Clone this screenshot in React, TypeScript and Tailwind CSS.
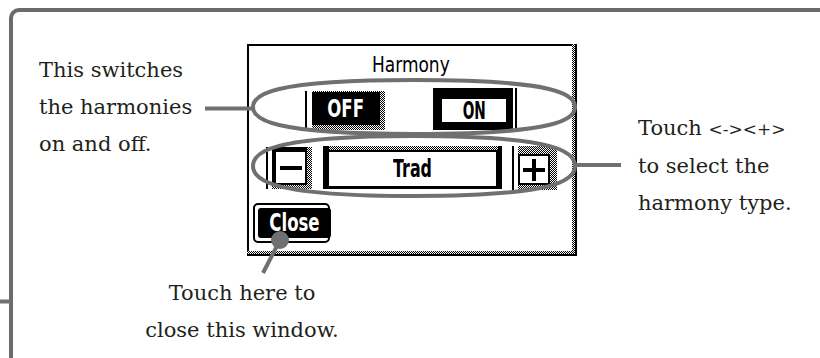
import React from 'react'

const dither = 'bg-[image:repeating-conic-gradient(#000_0%_25%,#fff_0%_50%)] bg-[length:2px_2px]'
const lcd = "font-['DejaVu_Sans',sans-serif] font-bold text-black"

// oval with pointed tips and fuller middle, like the hand drawn callouts
function ovalPath(cx: number, cy: number, rx: number, ry: number) {
  const a = 0.45
  const b = 0.9
  return [
    `M ${cx - rx} ${cy}`,
    `C ${cx - rx} ${cy - a * ry} ${cx - b * rx} ${cy - ry} ${cx} ${cy - ry}`,
    `C ${cx + b * rx} ${cy - ry} ${cx + rx} ${cy - a * ry} ${cx + rx} ${cy}`,
    `C ${cx + rx} ${cy + a * ry} ${cx + b * rx} ${cy + ry} ${cx} ${cy + ry}`,
    `C ${cx - b * rx} ${cy + ry} ${cx - rx} ${cy + a * ry} ${cx - rx} ${cy}`,
    'Z',
  ].join(' ')
}

function Label({ text, scale }: { text: string; scale: string }) {
  return (
    <span className={`inline-block text-[24px] leading-[24px] ${scale}`}>{text}</span>
  )
}

function HarmonyPanel() {
  return (
    <div className="w-[330px] h-[212px] bg-black pr-[2px] pb-[2px] flex">
      <div className={`flex-1 flex pr-[3px] pb-[3px] ${dither}`}>
        <div className={`flex-1 flex flex-col bg-white border-t-2 border-l-2 border-black ${lcd}`}>
          {/* title */}
          <div className="mt-[8px] h-[22px] flex justify-center">
            <span className="inline-block font-normal text-[20.5px] leading-[22px] scale-x-[0.83]">Harmony</span>
          </div>

          {/* OFF / ON */}
          <div className="mt-[12px] h-[42px] flex items-start pl-[56px] gap-[48px]">
            <div className="mt-[3px] h-[39px] w-[80px] flex border-l-2 border-black pl-[5px]">
              <div className={`flex-1 flex pr-[5px] pb-[5px] pt-[1px] ${dither}`}>
                <div className="flex-1 bg-black text-white flex items-center justify-center">
                  <Label text="OFF" scale="scale-x-[0.69]" />
                </div>
              </div>
            </div>
            <div className="flex h-[42px]">
              <div className="w-[80px] bg-black pt-[9px] pl-[7px] pr-[5px] pb-[6px] flex">
                <div className="flex-1 bg-white border-2 border-black flex items-center justify-center">
                  <Label text="ON" scale="scale-x-[0.57]" />
                </div>
              </div>
              <div className="ml-[2px] w-[2px] bg-black" />
            </div>
          </div>

          {/* - Trad + */}
          <div className="mt-[16px] h-[44px] flex pl-[17px]">
            <div className="w-[46px] h-[42px] flex border-l-2 border-black pl-[4px] mt-[1px]">
              <div className={`flex-1 flex pr-[5px] pb-[4px] ${dither}`}>
                <div className="flex-1 bg-white border-t-[5px] border-l-[4px] border-r-2 border-b-2 border-black flex items-center justify-center">
                  <div className="w-[22px] h-[4px] bg-black" />
                </div>
              </div>
            </div>
            <div className="ml-[11px] w-[179px] h-[43px] bg-black pl-[6px] pr-[4px] pb-[3px] flex">
              <div className={`flex-1 flex pt-[4px] ${dither}`}>
                <div className="flex-1 bg-white border-t-2 border-r-2 border-black flex items-center justify-center">
                  <Label text="Trad" scale="scale-x-[0.66]" />
                </div>
              </div>
            </div>
            <div className="ml-[10px] w-[45px] h-[44px] flex border-l-2 border-black pl-[4px]">
              <div className={`flex-1 flex pr-[7px] pb-[5px] pt-[8px] ${dither}`}>
                <div className="flex-1 bg-white border-2 border-black flex items-center justify-center">
                  <svg width="22" height="22" viewBox="0 0 22 22">
                    <rect x="0" y="9" width="22" height="4" fill="#000" />
                    <rect x="9" y="0" width="4" height="22" fill="#000" />
                  </svg>
                </div>
              </div>
            </div>
          </div>

          {/* Close */}
          <div className="mt-[13px] pl-[4px] flex">
            <div className="w-[77px] h-[40px] border-2 border-black rounded-[5px] p-[3px] flex">
              <div className="flex-1 bg-black rounded-[3px] text-white flex items-center justify-center">
                <Label text="Close" scale="scale-x-[0.69]" />
              </div>
            </div>
          </div>
        </div>
      </div>
    </div>
  )
}

export default function App() {
  const serif = "font-['DejaVu_Serif',serif] text-[21px] leading-[37px] text-[#231f20]"

  return (
    <div className="relative w-[820px] h-[358px] overflow-hidden bg-white">
      <div className="ml-[9px] mt-[8px] w-[860px] h-[400px] border-l-4 border-t-4 border-[#6b6b6b] rounded-tl-[10px]">
        <div className="flex items-start">
          <div className={`w-[234px] pl-[26px] mt-[40px] ${serif}`}>
            <p>This switches</p>
            <p>the harmonies</p>
            <p>on and off.</p>
          </div>

          <div className="mt-[32px]">
            <HarmonyPanel />
          </div>

          <div className={`pl-[61px] mt-[98px] ${serif}`}>
            <p>
              Touch <span className="text-[17px]">&lt;-&gt;&lt;+&gt;</span>
            </p>
            <p>to select the</p>
            <p>harmony type.</p>
          </div>
        </div>

        <div className={`mt-[19px] ml-[109px] w-[240px] text-center ${serif}`}>
          <p>Touch here to</p>
          <p>close this window.</p>
        </div>
      </div>

      {/* callout drawing */}
      <svg className="absolute inset-0 pointer-events-none" width="820" height="358" viewBox="0 0 820 358">
        <g stroke="#707070" strokeWidth="4" fill="none">
          <line x1="0" y1="301.5" x2="10" y2="301.5" />
          <line x1="205" y1="108.5" x2="253" y2="108.5" />
          <path d={ovalPath(414, 107, 161, 27)} />
          <path d={ovalPath(414, 166, 161, 30)} />
          <line x1="575" y1="165" x2="621" y2="165" />
          <line x1="280" y1="240" x2="263" y2="273" />
        </g>
        <circle cx="280" cy="240" r="9" fill="#707070" />
      </svg>
    </div>
  )
}
